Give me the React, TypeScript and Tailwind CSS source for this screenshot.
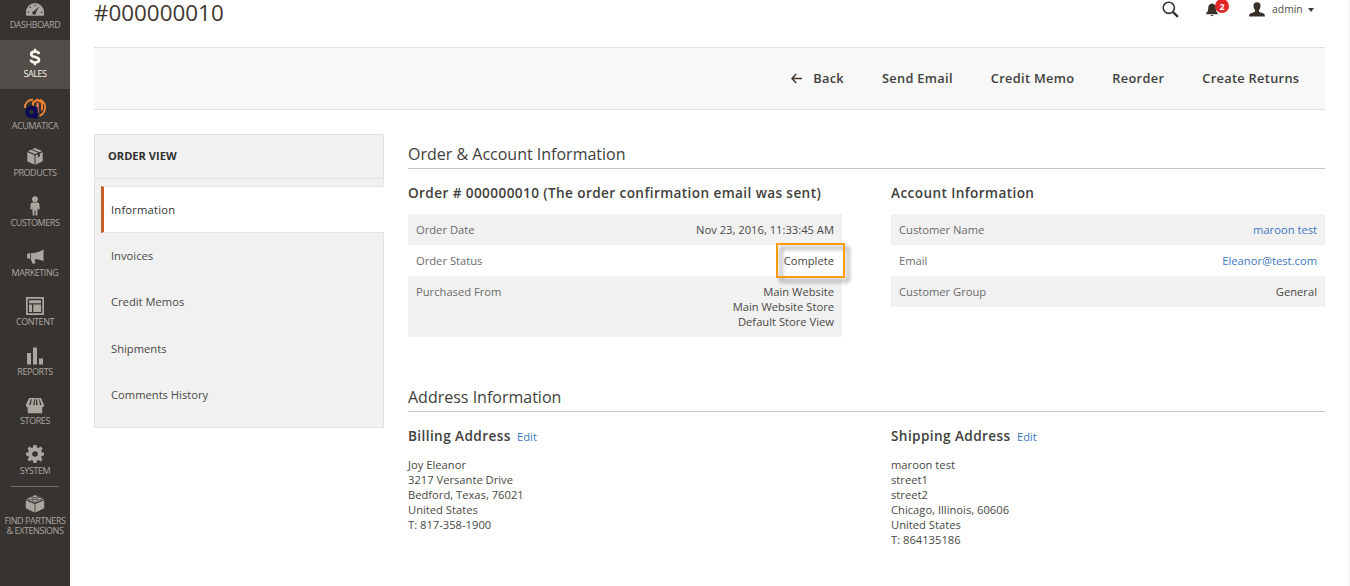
import React from "react";

type Item = { label: React.ReactNode; icon: React.ReactNode; box: string; active?: boolean };

const DashboardIcon = () => (
  <svg className="mt-[2px]" width="18" height="13" viewBox="0 0 18 13" fill="currentColor">
    <path fillRule="evenodd" d="M9 0a9 9 0 0 1 9 9v2.200c0 1-.5 1.600-1.500 1.600h-15C.5 12.800 0 12.200 0 11.200V9a9 9 0 0 1 9-9Zm4.200 3.300L8.300 8a1.900 1.900 0 1 0 1.700 1.400ZM8.500 1.500v1.600h1V1.500ZM3.500 4l1.200 1.200.7-.7-1.200-1.200ZM1.500 8.700v1h1.700v-1Zm13.300 0v1h1.700v-1Z" />
  </svg>
);
const DollarIcon = () => (
  <svg width="12" height="18" viewBox="0 0 12 18" fill="none" stroke="currentColor">
    <path strokeWidth="2.700" d="M10 6.200C9.800 4.400 8.200 3.600 6 3.600S2.200 4.500 2.200 6.200c0 3.800 7.800 1.700 7.800 5.600 0 1.800-1.600 2.700-4 2.700s-4-.9-4.200-2.900" />
    <path strokeWidth="2.200" d="M6 .8v3M6 14.200v3" />
  </svg>
);
const AcumaticaIcon = () => (
  <svg width="24" height="24" viewBox="0 0 24 24" fill="none">
    <path stroke="#e8893a" strokeWidth="1.800" d="M2 11C1.500 6.500 5 2.800 10 2.500M17 2.500c4 1.500 6 6 4.800 10.500-.8 2.800-2.500 4.800-5.300 5.800" />
    <path fill="#ef7a32" d="m14.500 1.500 5.500 3.300v8l-2 1.200V6.200l-3.500-2-3.500 2v3L9 8V4.800Z" />
    <path fill="#f0825a" d="M13.500 6h2.200v10h-2.200Z" />
    <circle cx="8.500" cy="15" r="4.300" stroke="#0c0c54" strokeWidth="4" />
    <path fill="#0c0c54" d="M10.500 10h4v11.700h-4Z" />
  </svg>
);
const BoxIcon = () => (
  <svg width="16" height="17" viewBox="0 0 16 17" fill="currentColor">
    <path d="M8 0 15.200 3 12.300 4.300 5 1.250ZM4 1.700l7.200 3.100L8 6.200.8 3ZM.3 4.100l7.200 3.100v9.500L.3 13.300ZM15.700 4.100v9.200l-7.200 3.400V7.200l2.300-1v3.200l2-1V5.400Z" />
  </svg>
);
const PersonIcon = () => (
  <svg width="12" height="20" viewBox="0 0 12 20" fill="currentColor">
    <circle cx="6" cy="3.200" r="2.900" />
    <path d="M3.800 6.500h4.400c1.500 0 2.200.8 2.200 2.200l.4 4.500-1.400.3-.6-2.300-.5 8.300H6.500v-5h-1v5H3.700l-.5-8.300-.6 2.300-1.400-.3.400-4.500c0-1.400.7-2.200 2.200-2.200Z" />
  </svg>
);
const MegaphoneIcon = () => (
  <svg width="18" height="15" viewBox="0 0 18 15" fill="currentColor">
    <path d="M17.500.5v11.800c-3-1.700-5.500-2.100-8.800-2.100l.8 4.200H6.300L4.800 10V4.200C9 4.200 13.500 3 17.500.5ZM4 4.300v5.500H2.300C.4 9.500.4 4.600 2.300 4.300Z" />
  </svg>
);
const ContentIcon = () => (
  <svg className="mt-[2px]" width="18" height="18" viewBox="0 0 18 18" fill="currentColor">
    <path fillRule="evenodd" d="M0 0h18v18H0ZM1.700 1.700v14.600h14.600V1.700ZM3 3.200h12v3H3ZM3 7.500h3v7.500H3ZM7.300 7.500H15V15H7.300Z" />
  </svg>
);
const ReportsIcon = () => (
  <svg className="mt-px" width="18" height="18" viewBox="0 0 18 18" fill="currentColor">
    <path d="M1 6h4v11.500H1ZM7 .5h4v17H7ZM13 11.500h4v6h-4Z" />
  </svg>
);
const StoreIcon = () => (
  <svg className="mt-[3px]" width="18" height="16" viewBox="0 0 18 16" fill="currentColor">
    <path fillRule="evenodd" d="M3 0h12l3 6.700c0 1.700-.7 2.600-1.800 2.800v5.800H1.800V9.500C.7 9.300 0 8.400 0 6.700ZM4.800 1.200 3 7h1.500l1.400-5.800ZM8 1.200 7.300 7h1.500V1.200ZM10 1.200V7h1.500L11 1.200ZM13 1.200 14 7h1.500l-1.800-5.800Z" />
  </svg>
);
const GearIcon = () => (
  <svg width="18" height="18" viewBox="0 0 18 18" fill="currentColor">
    <path fillRule="evenodd" d="M7.500 0h3l.5 2.500 1.400.6 2.200-1.500 2 2-1.500 2.200.6 1.500 2.300.4v2.800l-2.300.5-.6 1.400 1.500 2.200-2 2-2.200-1.500-1.400.6-.5 2.300h-3l-.5-2.300-1.400-.6-2.200 1.500-2-2 1.500-2.200-.6-1.400L0 10.500V7.700l2.300-.4.600-1.500-1.500-2.200 2-2 2.200 1.500L7 2.500ZM9 6.200a2.800 2.800 0 1 0 0 5.600 2.800 2.800 0 0 0 0-5.600Z" />
  </svg>
);
const BrickIcon = () => (
  <svg className="-mt-[2px]" width="20" height="19" viewBox="0 0 20 19" fill="currentColor">
    <path d="M.8 6.200 9.600 9.900v8.600L.8 14.300ZM19.200 6.200v8.100l-8.800 4.200V9.900ZM10 1l8.800 4.300L10 9 1.200 5.300Z" />
    <g stroke="#373330" strokeWidth=".7">
      <ellipse cx="10" cy="2.300" rx="2.500" ry="1.400" />
      <ellipse cx="5.500" cy="4.500" rx="2.500" ry="1.400" />
      <ellipse cx="14.500" cy="4.500" rx="2.500" ry="1.400" />
      <ellipse cx="10" cy="6.800" rx="2.500" ry="1.400" />
    </g>
  </svg>
);

const menu: Item[] = [
  { label: "DASHBOARD", icon: <DashboardIcon />, box: "h-[49px] pt-[5px]" },
  { label: "SALES", icon: <DollarIcon />, box: "h-[49px] pt-[5px]", active: true },
  { label: "ACUMATICA", icon: <AcumaticaIcon />, box: "h-[51px] pt-[8px]" },
  { label: "PRODUCTS", icon: <BoxIcon />, box: "h-[50px] pt-[4px]" },
  { label: "CUSTOMERS", icon: <PersonIcon />, box: "h-[50px] pt-[4px]" },
  { label: "MARKETING", icon: <MegaphoneIcon />, box: "h-[49px] pt-[4px]" },
  { label: "CONTENT", icon: <ContentIcon />, box: "h-[50px] pt-[4px]" },
  { label: "REPORTS", icon: <ReportsIcon />, box: "h-[49px] pt-[4px]" },
  { label: "STORES", icon: <StoreIcon />, box: "h-[49px] pt-[4px]" },
  { label: "SYSTEM", icon: <GearIcon />, box: "h-[49px] pt-[5px]" },
];

const MenuItem = ({ label, icon, box, active }: Item) => (
  <li
    className={`flex shrink-0 flex-col items-center ${box} ${
      active ? "bg-[#524d49] text-[#f7f3eb]" : "text-[#aaa6a0]"
    }`}
  >
    <span className="flex h-[24px] items-center">{icon}</span>
    <span className="text-center text-[9px] leading-[10px] tracking-[-0.430px] whitespace-nowrap">{label}</span>
  </li>
);

const Sidebar = () => (
  <nav className="w-[70px] shrink-0 bg-[#373330]">
    <ul className="-mt-[9px] flex flex-col">
      {menu.map((m, i) => (
        <MenuItem key={i} {...m} />
      ))}
      <li className="mx-[11px] h-px bg-[#736963]" />
      <MenuItem
        label={<>FIND PARTNERS<br />&amp; EXTENSIONS</>}
        icon={<BrickIcon />}
        box="pt-[5px]"
      />
    </ul>
  </nav>
);

const Header = () => (
  <header className="flex h-[47px] justify-between">
    <h1 className="text-[22.400px] leading-[26px] text-[#41362f]">#000000010</h1>
    <div className="flex h-[19px] items-center pr-[11px] text-[#41362f]">
      <svg width="17" height="17" viewBox="0 0 17 17" fill="none" stroke="#333" strokeWidth="1.600">
        <circle cx="6.800" cy="6.800" r="5.600" />
        <path strokeWidth="2.200" d="m10.900 10.900 5 5" />
      </svg>
      <span className="relative ml-[27px] h-[13px] w-[12px]">
        <svg width="12" height="14" viewBox="0 0 12 14" fill="#3a302a">
          <path d="M6 .5c2.800.3 3.800 2.300 3.800 4.700 0 2.800.7 3.700 2 5v1H.2v-1c1.300-1.300 2-2.200 2-5C2.200 2.800 3.200.8 6 .5ZM4.600 12h2.800c-.3 1.600-2.500 1.600-2.800 0Z" />
        </svg>
        <span className="absolute -top-[4px] left-[9px] flex h-[14px] w-[14px] items-center justify-center rounded-full bg-[#e22626] text-[9px] leading-none font-bold text-white">
          2
        </span>
      </span>
      <svg className="ml-[31px]" width="16" height="15" viewBox="0 0 16 15" fill="#3a302a">
        <path d="M8 .3c2.500 0 3.700 1.600 3.500 4-.1 1.800-.8 3-1.500 3.800v1.600c1.800 1 5.300 1.200 5.700 3l.2 1.800H.1l.2-1.800c.4-1.800 3.900-2 5.700-3V8.100c-.7-.8-1.400-2-1.500-3.800-.2-2.400 1-4 3.500-4Z" />
      </svg>
      <span className="ml-[7px] w-[30px] text-[10.400px] text-[#514943]">admin</span>
      <span className="ml-[6px] border-x-[3.500px] border-t-[4px] border-x-transparent border-t-[#41362f]" />
    </div>
  </header>
);

const actions = ["Send Email", "Credit Memo", "Reorder", "Create Returns"];

const Toolbar = () => (
  <div className="flex h-[63px] items-center justify-end gap-[38px] border-y border-[#e0e0e0] bg-[#f8f8f8] pr-[25.600px] text-[12.800px] font-semibold tracking-[0.310px] text-[#41403c]">
    <span className="flex items-center">
      <svg className="mr-[11px]" width="11" height="11" viewBox="0 0 11 11" fill="none" stroke="#41362f" strokeWidth="1.500">
        <path d="M5.200 1 1 5.500 5.200 10M1 5.500h10" />
      </svg>
      Back
    </span>
    {actions.map((a) => (
      <span key={a}>{a}</span>
    ))}
  </div>
);

const tabs = ["Invoices", "Credit Memos", "Shipments", "Comments History"];

const OrderTabs = () => (
  <aside className="flex h-[294px] w-[290px] shrink-0 flex-col border border-[#e3e3e3] bg-[#f1f1f1] text-[11.200px] text-[#4a4946]">
    <h2 className="flex h-[44px] items-center border-b border-[#e3e3e3] pl-[13px] text-[11.100px] font-bold text-[#303030]">
      ORDER VIEW
    </h2>
    <div className="mt-[7px] -mr-px ml-[6px] flex h-[47px] items-center border-y border-l-[3px] border-y-[#e3e3e3] border-l-[#c4602c] bg-white pt-px pl-[7px] font-medium tracking-[0.200px] text-[#303030]">
      Information
    </div>
    {tabs.map((t) => (
      <div key={t} className="flex h-[46.400px] items-center pl-[16px]">
        {t}
      </div>
    ))}
  </aside>
);

const SectionTitle = ({ children }: { children: React.ReactNode }) => (
  <h2 className="h-[27px] border-b border-[#c8c8c8] text-[16px] leading-[24px] text-[#41403c]">{children}</h2>
);

const BlockTitle = ({ children }: { children: React.ReactNode }) => (
  <h3 className="text-[13.600px] leading-[20px] font-semibold tracking-[0.400px] text-[#41403c]">{children}</h3>
);

const Row = ({ name, shaded, children }: { name: string; shaded?: boolean; children: React.ReactNode }) => (
  <div className={`flex justify-between px-[8px] py-[8px] leading-[15px] ${shaded ? "bg-[#f1f1f1]" : ""}`}>
    <span className="text-[#6b6b6b]">{name}</span>
    <span className="text-right text-[#4a4946]">{children}</span>
  </div>
);

const Address = ({ title, lines }: { title: string; lines: string[] }) => (
  <div className="w-[434px]">
    <div className="flex h-[20px] items-baseline">
      <BlockTitle>{title}</BlockTitle>
      <a className="ml-[6.400px] text-[11.200px] text-[#3d77c2]">Edit</a>
    </div>
    <address className="mt-[11px] leading-[15px] text-[#4a4946] not-italic">
      {lines.map((l) => (
        <div key={l}>{l}</div>
      ))}
    </address>
  </div>
);

export default function App() {
  return (
    <div className="flex h-[586px] w-[1350px] overflow-hidden border-r border-[#f0f0f0] bg-white font-['Open_Sans',sans-serif] text-[11.200px]">
      <Sidebar />
      <div className="w-[1255px] shrink-0 pl-[24px]">
        <Header />
        <Toolbar />
        <div className="flex gap-[24px] pt-[24px]">
          <OrderTabs />
          <main className="w-[917px] pt-[8px]">
            <SectionTitle>Order &amp; Account Information</SectionTitle>
            <div className="mt-[14px] flex justify-between">
              <section className="flex w-[434px] flex-col">
                <BlockTitle>Order # 000000010 (The order confirmation email was sent)</BlockTitle>
                <div className="mt-[11px]">
                  <Row name="Order Date" shaded>Nov 23, 2016, 11:33:45 AM</Row>
                  <Row name="Order Status">
                    <span className="relative">
                      Complete
                      <span className="absolute -top-[10px] -right-[11px] h-[35px] w-[69px] border-2 border-[#f99d0c] drop-shadow-[4px_4px_2px_rgba(0,0,0,0.45)]" />
                    </span>
                  </Row>
                  <Row name="Purchased From" shaded>
                    Main Website<br />Main Website Store<br />Default Store View
                  </Row>
                </div>
              </section>
              <section className="flex w-[434px] flex-col">
                <BlockTitle>Account Information</BlockTitle>
                <div className="mt-[11px]">
                  <Row name="Customer Name" shaded><a className="text-[#3d77c2]">maroon test</a></Row>
                  <Row name="Email"><a className="text-[#3d77c2]">Eleanor@test.com</a></Row>
                  <Row name="Customer Group" shaded>General</Row>
                </div>
              </section>
            </div>
            <div className="mt-[48px]">
              <SectionTitle>Address Information</SectionTitle>
            </div>
            <div className="mt-[14px] flex justify-between">
              <Address
                title="Billing Address"
                lines={["Joy Eleanor", "3217 Versante Drive", "Bedford, Texas, 76021", "United States", "T: 817-358-1900"]}
              />
              <Address
                title="Shipping Address"
                lines={["maroon test", "street1", "street2", "Chicago, Illinois, 60606", "United States", "T: 864135186"]}
              />
            </div>
          </main>
        </div>
      </div>
    </div>
  );
}
